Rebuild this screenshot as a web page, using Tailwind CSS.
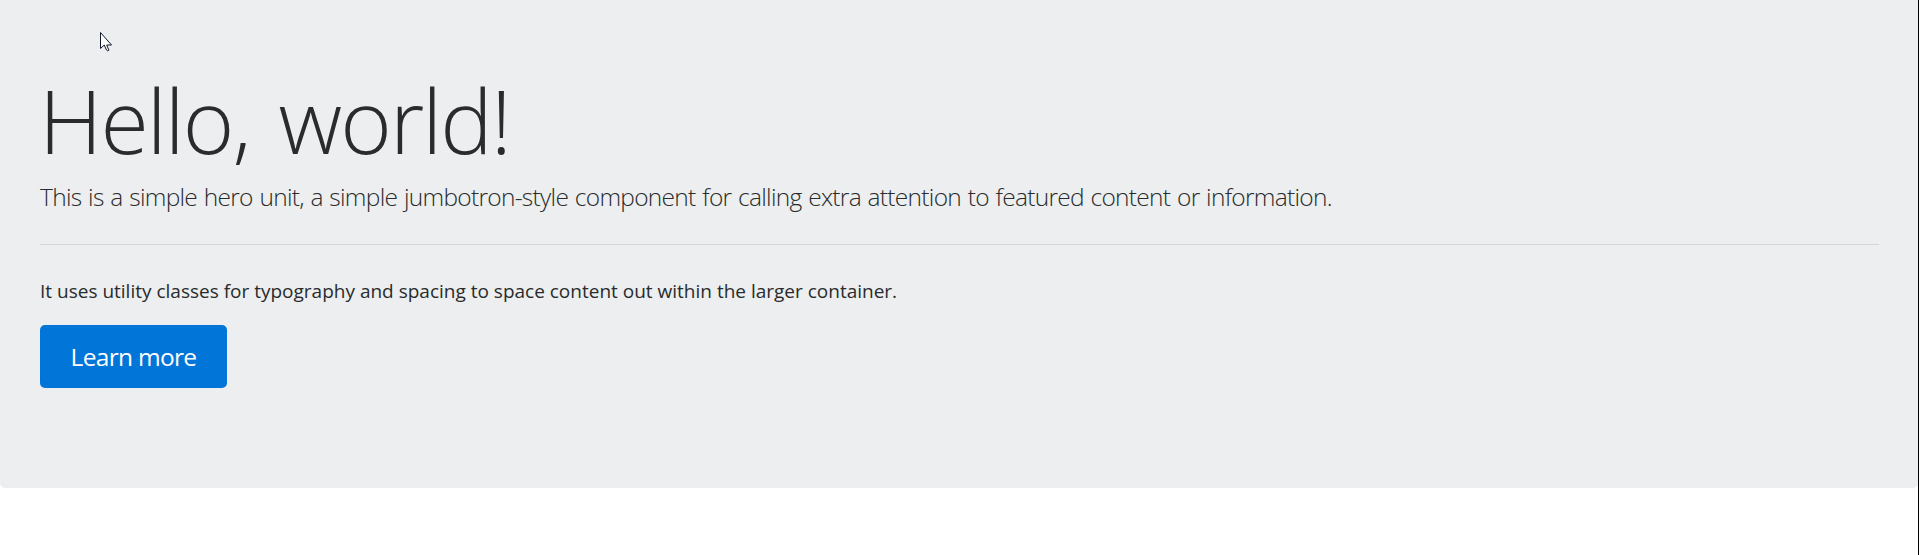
<!DOCTYPE html>
<html lang="en"><head><meta charset="utf-8"><title>Hello</title>
<script src="https://cdn.jsdelivr.net/npm/@tailwindcss/browser@4"></script></head>
<body class="relative h-[555px] overflow-hidden bg-white font-['Open_Sans',sans-serif] text-[#292b2c]">
<main class="h-[488px] w-[1918px] rounded-b-[5px] bg-[#eceeef] pl-10 pr-[39px] pt-[72px]">
<h1 class="-ml-px h-[107px] whitespace-nowrap text-[88px] font-light leading-[97px] tracking-[-1.9px] [word-spacing:8px]">Hello, world!</h1>
<p class="h-[65px] whitespace-nowrap text-[24.5px] font-light leading-[36px] tracking-[-0.71px] [word-spacing:1px]">This is a simple hero unit, a simple jumbotron-style component for calling extra attention to featured content or information.</p>
<hr class="border-t border-[#d3d5d6]">
<p class="mt-[31px] h-[49px] whitespace-nowrap text-[19px] leading-[30px]">It uses utility classes for typography and spacing to space content out within the larger container.</p>
<a class="flex h-[63px] w-[187px] items-center justify-center rounded-[5px] bg-[#0275d8] pt-0.5 text-[24.5px] tracking-[-0.7px] text-white"><span>Learn more</span></a>
</main>
<div class="absolute right-0 top-0 h-full w-px bg-black"></div>
<svg class="absolute left-[93px] top-[32px] ml-[7px]" width="12" height="20" viewBox="0 0 12 20"><path d="M.5.5v16l3.7-3.5 2.3 5q1 1.5 2.4.2l-2.2-5.2h4.8z" fill="#fff" stroke="#111827"/></svg>
</body></html>
